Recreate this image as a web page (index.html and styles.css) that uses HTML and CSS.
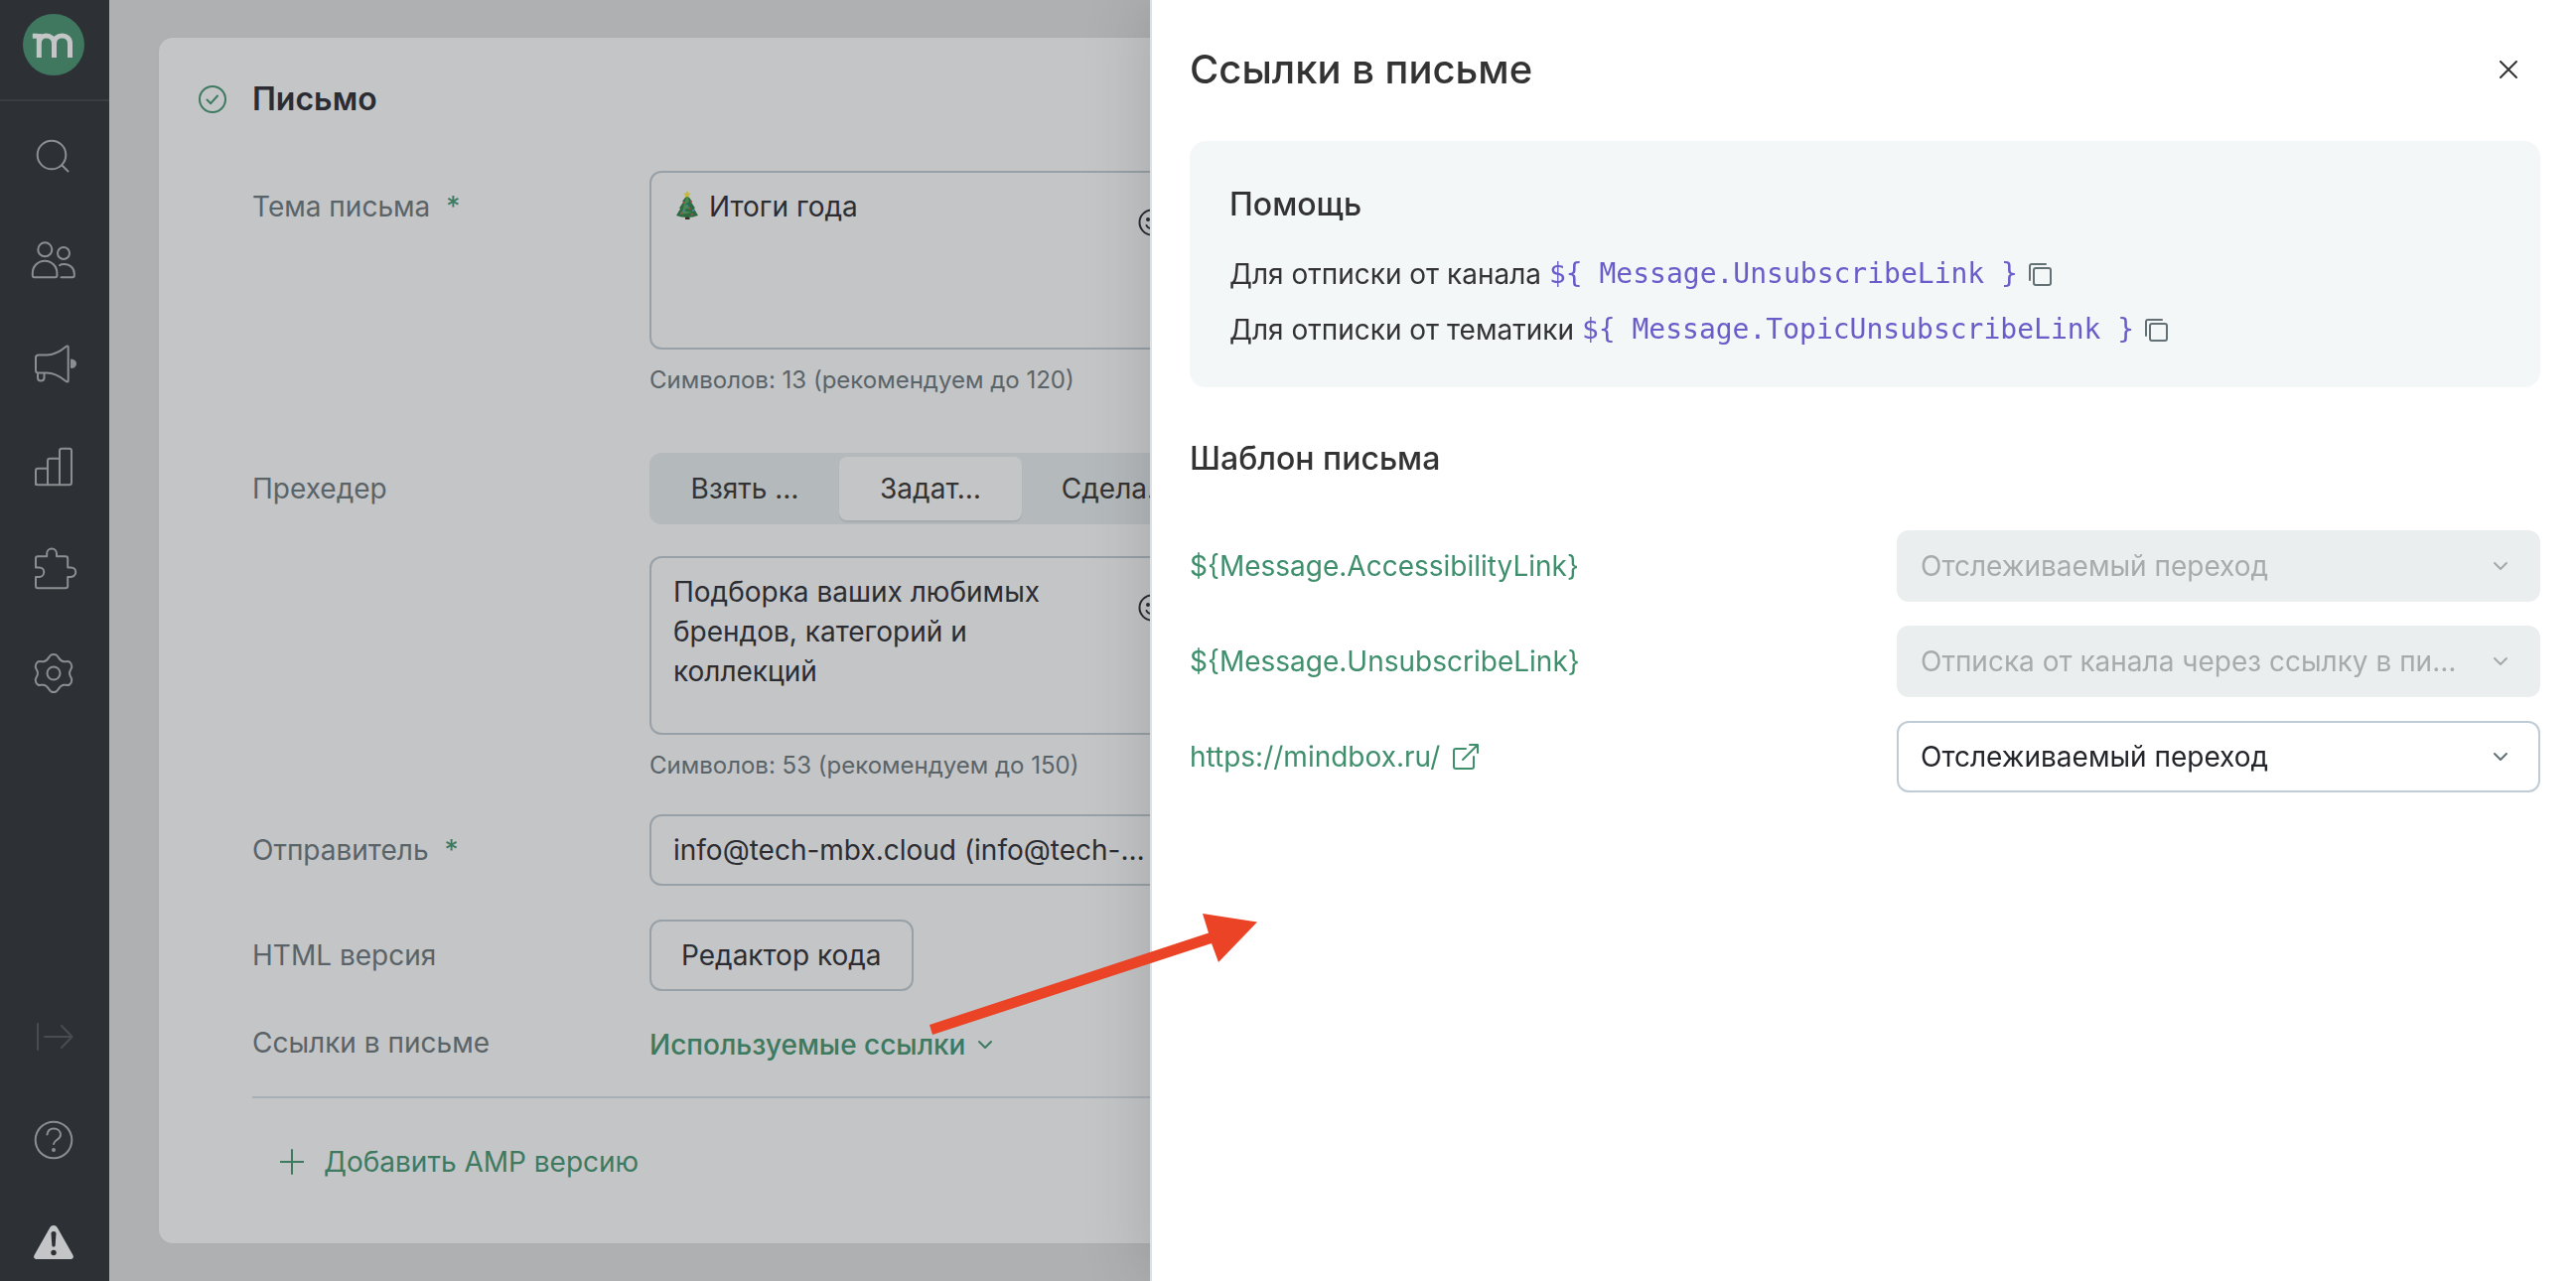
FILE: index.html
```html
<!DOCTYPE html>
<html lang="ru">
<head>
<meta charset="utf-8">
<meta name="viewport" content="width=device-width, initial-scale=1">
<title>Ссылки в письме</title>
<link rel="stylesheet" href="styles.css">
</head>
<body>
<nav class="sidebar" aria-label="Главное меню">
  <a class="sidebar__logo" href="#" aria-label="Главная">
    <svg width="62" height="62" viewBox="0 0 62 62"><circle class="logo-disc" cx="31" cy="31" r="31"/><path class="logo-mark" d="M9.800 22.300h5M16.300 20v24M16.300 30c0-5 3-8 7.200-8s8 3 8 8v14M31.500 30c0-5 3.300-8 8-8s8 3 8 8v14"/></svg>
  </a>
  <ul class="sidebar__list">
    <li><a class="sidebar__item" href="#" aria-label="Поиск"><svg class="icon" width="48" height="48" viewBox="0 0 48 48"><circle cx="22" cy="22" r="14.300"/><path d="M32.500 32.500l6 6"/></svg></a></li>
    <li><a class="sidebar__item" href="#" aria-label="Клиенты"><svg class="icon" width="48" height="48" viewBox="0 0 48 48"><circle cx="15.300" cy="13.300" r="7"/><circle cx="34" cy="17" r="6"/><path d="M4.500 41.200c-1.200 0-1.700-.6-1.700-1.700v-2.500a12.200 12.200 0 0 1 24.600 0v2.500c0 1.100-.5 1.700-1.700 1.700zM30 29.200c1.200-1 2.600-1.200 4.500-1.200 6 0 10.300 4 10.300 9.500v2c0 1.100-.5 1.700-1.700 1.700H31.500"/></svg></a></li>
    <li><a class="sidebar__item" href="#" aria-label="Кампании"><svg class="icon" width="48" height="48" viewBox="0 0 48 48"><path d="M9 15.500h8c7 0 13.500-3.500 19.500-8.500 1.200-1 2.200-.6 2.200 .8v33.400c0 1.400-1 1.800-2.200.8-6-5-12.500-8.500-19.500-8.500H8.500c-1.500 0-2.500-1-2.500-2.500V18c0-1.500 1-2.500 3-2.500zM8 33.500v5c0 2 1 3 3 3s3.500-1 3.500-3v-5"/><path class="icon-solid" d="M42 20.500c2.600.5 4 2 4 3.700s-1.400 3.300-4 3.800z"/></svg></a></li>
    <li><a class="sidebar__item" href="#" aria-label="Отчёты"><svg class="icon" width="48" height="48" viewBox="0 0 48 48"><path d="M6 42V28c0-1.400.8-2.200 2.200-2.200H18V18c0-1.400.8-2.200 2.200-2.200H30V8c0-1.400.8-2.200 2.200-2.200h7.600C41.200 5.800 42 6.600 42 8v32c0 1.400-.8 2.200-2.200 2.200H8.200C6.800 42.200 6 41.400 6 40M18 25.800V42M30 15.800V42"/></svg></a></li>
    <li><a class="sidebar__item" href="#" aria-label="Интеграции"><svg class="icon" width="48" height="48" viewBox="0 0 48 48"><path d="M8 10.200h9.200V7.500a4.900 4.900 0 0 1 9.800 0v2.700h9c1.400 0 2.200.8 2.200 2.200v9h3.300a4.500 4.500 0 0 1 0 9.500h-3.300v9.200c0 1.400-.8 2.200-2.200 2.200H8c-1.300 0-2-.8-2-2.200v-9.200h3.500a4.500 4.500 0 0 0 0-9.500H6v-9c0-1.400.8-2.200 2-2.200z"/></svg></a></li>
    <li><a class="sidebar__item" href="#" aria-label="Настройки"><svg class="icon" width="48" height="48" viewBox="0 0 48 48"><circle cx="24" cy="24" r="6.500"/><path d="M21.500 5.500c1.500-.7 3.500-.7 5 0 2.500 1.500 3 6 7.500 6.700 2.500.3 4-.7 6 .3 2 1.400 2.300 3.400 2.300 5 0 2-2.300 3.500-2.300 6.500s2.300 4.500 2.300 6.500c0 1.600-.3 3.600-2.300 5-2 1-3.500 0-6 .3-4.500.7-5 5.200-7.500 6.700-1.500.7-3.500.7-5 0-2.500-1.500-3-6-7.500-6.700-2.500-.3-4 .7-6-.3-2-1.400-2.300-3.400-2.300-5 0-2 2.300-3.500 2.300-6.500s-2.300-4.500-2.300-6.500c0-1.600.3-3.600 2.300-5 2-1 3.500 0 6-.3 4.500-.7 5-5.200 7.500-6.700z"/></svg></a></li>
  </ul>
  <ul class="sidebar__list sidebar__list--bottom">
    <li><button class="sidebar__item sidebar__item--muted" type="button" aria-label="Развернуть меню"><svg class="icon" width="48" height="48" viewBox="0 0 48 48"><path d="M8 11v26M15 24h27M32 13l10.500 11L32 35"/></svg></button></li>
    <li><a class="sidebar__item" href="#" aria-label="Справка"><svg class="icon" width="48" height="48" viewBox="0 0 48 48"><circle cx="24" cy="24" r="18.300"/><path d="M17.500 18.500c.5-4 3-6 6.500-6 4 0 7 2.500 7 6.300 0 5-6.500 4.700-7 9.200"/><circle class="icon-solid" cx="24" cy="34" r="1"/></svg></a></li>
    <li><a class="sidebar__item" href="#" aria-label="Предупреждения"><svg width="48" height="48" viewBox="0 0 48 48"><path class="warn" d="M24 6c2 0 3.200 1 4.200 3l15 26.500c1.600 3 .3 4.500-2.700 4.500h-33c-3 0-4.300-1.500-2.700-4.500l15-26.500c1-2 2.200-3 4.200-3z"/><path class="warn-mark" d="M21.500 14c0-2.700 5-2.700 5 0l-.8 12c-.2 2.300-3.200 2.300-3.400 0z"/><circle class="warn-mark" cx="24" cy="33.500" r="2.700"/></svg></a></li>
  </ul>
</nav>

<main class="page">
  <section class="card">
    <h2 class="card__title">
      <svg class="icon icon--green" width="28" height="28" viewBox="0 0 28 28"><circle cx="14" cy="14" r="13"/><path d="M8.500 14.500l3.700 3.700L19 10.500"/></svg>
      Письмо
    </h2>
    <form class="form">
      <div class="row">
        <label class="row__label" for="subject">Тема письма<span class="required">*</span></label>
        <div class="row__control">
          <div class="textbox">
            <textarea class="field field--area field--emoji" id="subject">Итоги года</textarea>
            <svg class="textbox__tree" width="24" height="30" viewBox="0 0 24 30"><path fill="#3d2b22" d="M10 24h4.500v5H10z"/><path fill="#2f6b40" d="M12 4l5 7-1 .5 4 6-1.200.5L23 25c-6 2.600-16 2.600-22 0l4.200-7L4 17.500l4-6-1-.5z"/><path fill="#4b8a55" d="M12 5l2 6-4 3 5 3-8 3 10 2-12 2 3-6 1-5z"/><path fill="#c4b83e" d="M12 0l1.200 2.400 2.600.3-1.900 1.900.5 2.700L12 6l-2.400 1.300.5-2.700-1.900-1.900 2.600-.3z"/><g fill="#b5455a"><circle cx="9" cy="12" r="1"/><circle cx="16" cy="11" r="1"/><circle cx="14" cy="18" r="1"/><circle cx="6" cy="23" r="1"/><circle cx="17" cy="24" r="1"/></g><g fill="#4c83b0"><circle cx="12" cy="15" r="1"/><circle cx="18" cy="20" r="1"/><circle cx="9" cy="20" r="1"/></g></svg>
            <button class="textbox__emoji" type="button" aria-label="Эмодзи"><svg class="icon" width="28" height="28" viewBox="0 0 28 28"><circle cx="14" cy="14" r="12.500"/><path d="M8.500 17c1.500 4 9.500 4 11 0"/><circle class="icon-solid" cx="10" cy="11" r="1"/><circle class="icon-solid" cx="18" cy="11" r="1"/></svg></button>
          </div>
          <p class="hint">Символов: 13 (рекомендуем до 120)</p>
        </div>
      </div>

      <div class="row row--preheader">
        <label class="row__label" for="preheader">Прехедер</label>
        <div class="row__control">
          <div class="segments" role="radiogroup" aria-label="Прехедер">
            <label class="segment"><input class="segment__input" type="radio" name="mode"><span class="segment__text">Взять …</span></label>
            <label class="segment"><input class="segment__input" type="radio" name="mode" checked><span class="segment__text">Задат…</span></label>
            <label class="segment"><input class="segment__input" type="radio" name="mode"><span class="segment__text">Сдела…</span></label>
          </div>
          <div class="textbox">
            <textarea class="field field--area" id="preheader">Подборка ваших любимых брендов, категорий и коллекций</textarea>
            <button class="textbox__emoji" type="button" aria-label="Эмодзи"><svg class="icon" width="28" height="28" viewBox="0 0 28 28"><circle cx="14" cy="14" r="12.500"/><path d="M8.500 17c1.500 4 9.500 4 11 0"/><circle class="icon-solid" cx="10" cy="11" r="1"/><circle class="icon-solid" cx="18" cy="11" r="1"/></svg></button>
          </div>
          <p class="hint">Символов: 53 (рекомендуем до 150)</p>
        </div>
      </div>

      <div class="row row--tight">
        <label class="row__label" for="sender">Отправитель<span class="required">*</span></label>
        <div class="row__control">
          <select class="field field--select" id="sender"><option>info@tech-mbx.cloud (info@tech-mbx.cloud)</option></select>
        </div>
      </div>

      <div class="row row--tight">
        <span class="row__label">HTML версия</span>
        <div class="row__control"><button class="button" type="button">Редактор кода</button></div>
      </div>

      <div class="row row--links">
        <span class="row__label">Ссылки в письме</span>
        <div class="row__control">
          <button class="text-button text-button--bold" type="button">Используемые ссылки
            <svg class="icon" width="16" height="10" viewBox="0 0 16 10"><path d="M2 2l6 6 6-6"/></svg>
          </button>
        </div>
      </div>
    </form>
    <div class="card__footer">
      <button class="text-button" type="button">
        <svg class="icon" width="24" height="26" viewBox="0 0 24 26"><path d="M12 1v24M0 13h24"/></svg>
        Добавить AMP версию
      </button>
    </div>
  </section>
</main>

<aside class="drawer" aria-labelledby="drawer-title">
  <header class="drawer__header">
    <h1 class="drawer__title" id="drawer-title">Ссылки в письме</h1>
    <button class="drawer__close" type="button" aria-label="Закрыть"><svg class="icon" width="20" height="20" viewBox="0 0 20 20"><path d="M2 2l16 16M18 2L2 18"/></svg></button>
  </header>
  <section class="help">
    <h2 class="subtitle">Помощь</h2>
    <p class="help__line">Для отписки от канала <code class="code">${ Message.UnsubscribeLink }</code><button class="copy" type="button" aria-label="Скопировать"><svg class="icon" width="24" height="24" viewBox="0 0 24 24"><path d="M2 18V4c0-1.300.7-2 2-2h14"/><rect x="6" y="6" width="17" height="17" rx="2"/></svg></button></p>
    <p class="help__line">Для отписки от тематики <code class="code">${ Message.TopicUnsubscribeLink }</code><button class="copy" type="button" aria-label="Скопировать"><svg class="icon" width="24" height="24" viewBox="0 0 24 24"><path d="M2 18V4c0-1.300.7-2 2-2h14"/><rect x="6" y="6" width="17" height="17" rx="2"/></svg></button></p>
  </section>
  <h2 class="subtitle">Шаблон письма</h2>
  <ul class="links">
    <li class="links__row">
      <label class="links__name" for="link-1">${Message.AccessibilityLink}</label>
      <span class="picker picker--disabled"><select class="picker__select" id="link-1" disabled><option>Отслеживаемый переход</option></select><svg class="icon picker__arrow" width="16" height="10" viewBox="0 0 16 10"><path d="M2 2l6 6 6-6"/></svg></span>
    </li>
    <li class="links__row">
      <label class="links__name" for="link-2">${Message.UnsubscribeLink}</label>
      <span class="picker picker--disabled"><select class="picker__select" id="link-2" disabled><option>Отписка от канала через ссылку в письме</option></select><svg class="icon picker__arrow" width="16" height="10" viewBox="0 0 16 10"><path d="M2 2l6 6 6-6"/></svg></span>
    </li>
    <li class="links__row">
      <a class="links__name" href="#">https://mindbox.ru/<svg class="icon" width="28" height="28" viewBox="0 0 28 28"><path d="M14 6H4c-1.300 0-2 .7-2 2v16c0 1.300.7 2 2 2h16c1.300 0 2-.7 2-2V14M11 17L26 2M18 2h8v8"/></svg></a>
      <span class="picker"><select class="picker__select" aria-label="Тип ссылки"><option>Отслеживаемый переход</option></select><svg class="icon picker__arrow" width="16" height="10" viewBox="0 0 16 10"><path d="M2 2l6 6 6-6"/></svg></span>
    </li>
  </ul>
</aside>

<svg class="pointer" width="330" height="124" viewBox="0 0 330 124" aria-hidden="true"><path d="M0 112L281 19.500 275 0 330 8.500 291 49 284 30 3 122z"/></svg>
</body>
</html>
```
FILE: styles.css
```css
* {
  box-sizing: border-box;
}

body {
  margin: 0;
  min-height: 100vh;
  display: flex;
  overflow-x: hidden;
  background: #afb0b2;
  color: #2c2d33;
  font: 400 28px/40px Inter, "Noto Sans", sans-serif;
}

h1, h2, p, ul {
  margin: 0;
  padding: 0;
}

ul {
  list-style: none;
}

button, select, textarea {
  margin: 0;
  font: inherit;
  color: inherit;
}

button {
  padding: 0;
  border: 0;
  background: none;
}

svg {
  display: block;
  flex: none;
}

.icon {
  fill: none;
  stroke: currentColor;
  stroke-width: 2;
  stroke-linecap: round;
  stroke-linejoin: round;
}

.icon-solid {
  fill: currentColor;
}

.icon--green {
  color: #3e7a60;
}

/* Sidebar */
.sidebar {
  flex: none;
  width: 110px;
  display: flex;
  flex-direction: column;
  padding-bottom: 2px;
  background: #2d3035;
  color: #8d8e91;
}

.sidebar__logo {
  height: 102px;
  padding: 14px 0 0 23px;
  border-bottom: 2px solid #3b3d43;
}

.logo-disc {
  fill: #3f785f;
}

.logo-mark {
  fill: none;
  stroke: #c4c5c7;
  stroke-width: 5;
}

.sidebar__list {
  display: flex;
  flex-direction: column;
  gap: 32px;
  padding-top: 20px;
}

.sidebar__list--bottom {
  margin-top: auto;
}

.sidebar__item {
  width: 108px;
  height: 72px;
  display: flex;
  align-items: center;
  justify-content: center;
  color: inherit;
}

.sidebar__item--muted {
  color: #494c51;
}

.warn {
  fill: #c4c5c7;
}

.warn-mark {
  fill: #2d3035;
}

/* Letter card */
.page {
  flex: 1;
  min-width: 0;
  padding: 38px 50px;
}

.card {
  padding: 42px 40px 62px;
  border-radius: 14px;
  background: #c4c5c7;
  box-shadow: 0 0 2px #a5adb3;
}

.card__title {
  display: flex;
  align-items: center;
  gap: 26px;
  margin-bottom: 52px;
  font-size: 32px;
  font-weight: 600;
  line-height: 40px;
}

.form {
  margin-left: 54px;
  padding-bottom: 32px;
  border-bottom: 2px solid #a9b0b5;
}

.row {
  display: grid;
  grid-template-columns: 400px 566px;
}

.row__label {
  padding-top: 16px;
  color: #5a6468;
}

.required {
  margin-left: 16px;
  color: #3e7a60;
}

.row--preheader {
  margin-top: 58px;
}

.row--tight {
  margin-top: 34px;
}

.row--links {
  margin-top: 32px;
}

.row--links .row__label {
  padding-top: 0;
}

.row--links .row__control {
  padding-top: 2px;
}

.textbox {
  position: relative;
}

.field {
  display: block;
  width: 100%;
  border: 2px solid #98a1a7;
  border-radius: 12px;
  background: none;
}

.field--area {
  height: 180px;
  padding: 14px 110px 14px 22px;
  resize: none;
}

.field--emoji {
  text-indent: 36px;
}

.field--select {
  height: 72px;
  padding: 0 64px 0 22px;
  appearance: none;
  text-overflow: ellipsis;
}

.textbox__tree {
  position: absolute;
  top: 20px;
  left: 26px;
}

.textbox__emoji {
  position: absolute;
  top: 38px;
  right: 46px;
}

.hint {
  margin-top: 16px;
  color: #5a6468;
  font-size: 24px;
  line-height: 30px;
}

.segments {
  display: grid;
  grid-template-columns: repeat(3, 1fr);
  gap: 3px;
  margin-bottom: 32px;
  padding: 4px;
  border-radius: 12px;
  background: #b4b9bc;
  color: #333;
}

.segment {
  position: relative;
}

.segment__input {
  position: absolute;
  opacity: 0;
}

.segment__text {
  display: block;
  border-radius: 8px;
  line-height: 64px;
  text-align: center;
}

.segment__input:checked + .segment__text {
  background: #c4c5c7;
  box-shadow: 0 2px 1px #a6abae;
}

.button {
  height: 72px;
  padding: 0 30px;
  border: 2px solid #98a1a7;
  border-radius: 12px;
}

.text-button {
  display: flex;
  align-items: center;
  gap: 20px;
  color: #3e7a60;
}

.text-button--bold {
  gap: 12px;
  font-weight: 500;
}

.card__footer {
  margin: 44px 0 0 82px;
}

/* Drawer */
.drawer {
  position: fixed;
  top: 0;
  right: 0;
  bottom: 0;
  left: 1158px;
  padding: 46px 36px 0 38px;
  border-left: 2px solid #d9e1e6;
  background: #fff;
  color: #333;
  box-shadow: 0 0 64px rgba(0, 0, 0, .16);
}

.drawer__header {
  display: flex;
  align-items: center;
  justify-content: space-between;
  margin-bottom: 48px;
}

.drawer__title {
  font-size: 40px;
  font-weight: 500;
  line-height: 48px;
}

.drawer__close {
  margin-right: 22px;
}

.subtitle {
  font-size: 32px;
  font-weight: 500;
  line-height: 40px;
}

.help {
  margin-bottom: 52px;
  padding: 44px 40px 30px;
  border-radius: 16px;
  background: #f3f7f8;
}

.help .subtitle {
  margin-bottom: 22px;
}

.help__line {
  display: flex;
  align-items: center;
  line-height: 56px;
  white-space: pre;
}

.code {
  color: #6b5cc9;
  font-family: "DejaVu Sans Mono", monospace;
  font-size: 28px;
}

.copy {
  margin-left: 10px;
  color: #637074;
}

.links {
  display: grid;
  gap: 24px;
  margin-top: 52px;
}

.links__row {
  display: grid;
  grid-template-columns: 1fr 648px;
  align-items: center;
}

.links__name {
  display: flex;
  align-items: center;
  gap: 12px;
  color: #3f8f6d;
  text-decoration: none;
}

.picker {
  position: relative;
  color: #637074;
}

.picker__select {
  display: block;
  width: 100%;
  height: 72px;
  padding: 0 76px 0 22px;
  border: 2px solid #c0ccd5;
  border-radius: 12px;
  background: #fff;
  color: #24252b;
  appearance: none;
  text-overflow: ellipsis;
}

.picker__arrow {
  position: absolute;
  top: 31px;
  right: 32px;
}

.picker--disabled {
  color: #a5a9ab;
}

.picker--disabled .picker__select {
  border-color: #ebeeef;
  background: #ebeeef;
  color: #a8abac;
  opacity: 1;
}

/* Callout arrow drawn over the form and the drawer */
.pointer {
  position: absolute;
  top: 920px;
  left: 936px;
  fill: #ea4326;
}
```
